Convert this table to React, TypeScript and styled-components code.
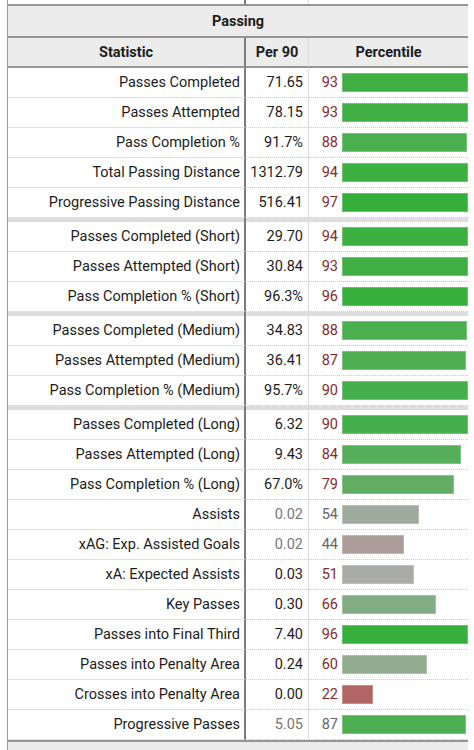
import styled, { createGlobalStyle } from "styled-components";

const Global = createGlobalStyle`
    body {
        margin: 0;
        background: #fff;
        font-family: Roboto, "Noto Sans", "Liberation Sans", sans-serif;
        color: #1c1c1c;
    }
`;

const Page = styled.div`
    width: 474px;
    height: 750px;
    overflow: hidden;
    padding-left: 7px;
    box-sizing: border-box;
`;

const Table = styled.div`
    width: 460px;
    border-left: 1px solid #9a9a9a;
`;

const Row = styled.div<{ $h?: number }>`
    display: grid;
    grid-template-columns: 238px 63px 159px;
    height: ${(p) => p.$h ?? 30}px;
    box-sizing: border-box;
`;

const StatCell = styled.div<{ $bg?: string; $line?: boolean }>`
    display: flex;
    align-items: center;
    justify-content: flex-end;
    padding-right: 4px;
    border-right: 2px solid #7c7c7c;
    border-bottom: ${(p) => (p.$line ? "1px solid #e1e1e1" : "none")};
    background: ${(p) => p.$bg ?? "#fff"};
    font-size: 14.5px;
    white-space: nowrap;
    box-sizing: border-box;
`;

const ValueCell = styled.div<{ $bg?: string; $line?: boolean; $muted?: boolean }>`
    display: flex;
    align-items: center;
    justify-content: flex-end;
    padding-right: 5px;
    border-right: 1px solid #dcdcdc;
    border-bottom: ${(p) => (p.$line ? "1px dotted #c8c8c8" : "none")};
    background: ${(p) => p.$bg ?? "#fff"};
    color: ${(p) => (p.$muted ? "#777" : "#1c1c1c")};
    font-size: 14.5px;
    box-sizing: border-box;
`;

const PctCell = styled.div<{ $bg?: string; $line?: boolean }>`
    display: flex;
    align-items: center;
    min-width: 0;
    border-bottom: ${(p) => (p.$line ? "1px dotted #c8c8c8" : "none")};
    background: ${(p) => p.$bg ?? "#fff"};
    box-sizing: border-box;
`;

const PctNum = styled.span<{ $muted?: boolean }>`
    flex: 0 0 29px;
    text-align: right;
    font-size: 14.5px;
    color: ${(p) => (p.$muted ? "#666" : "#862b2b")};
`;

const BarTrack = styled.div`
    flex: 1 1 0;
    min-width: 0;
    margin-left: 4px;
    height: 19px;
    display: flex;
    overflow: hidden;
`;

const Bar = styled.div`
    height: 100%;
    flex: none;
    max-width: 100%;
    box-sizing: border-box;
    border: 1px solid rgba(255, 255, 255, 0.25);
`;

const SectionHead = styled.div`
    height: 34px;
    border-top: 2px solid #959595;
    border-bottom: 2px solid #959595;
    background: #ececec;
    display: flex;
    align-items: center;
    justify-content: center;
    font-weight: 700;
    font-size: 14.5px;
    box-sizing: border-box;
`;

const HeadCell = styled.div<{ $dark?: boolean; $last?: boolean }>`
    display: flex;
    align-items: center;
    justify-content: center;
    background: #ececec;
    font-weight: 700;
    font-size: 14.5px;
    border-bottom: 2px solid #959595;
    border-right: ${(p) => (p.$last ? "none" : p.$dark ? "2px solid #7c7c7c" : "1px solid #dcdcdc")};
    box-sizing: border-box;
`;

type Stat = { name: string; value: string; pct: number; mutedValue?: boolean; mutedPct?: boolean };

const groups: Stat[][] = [
    [
        { name: "Passes Completed", value: "71.65", pct: 93 },
        { name: "Passes Attempted", value: "78.15", pct: 93 },
        { name: "Pass Completion %", value: "91.7%", pct: 88 },
        { name: "Total Passing Distance", value: "1312.79", pct: 94 },
        { name: "Progressive Passing Distance", value: "516.41", pct: 97 },
    ],
    [
        { name: "Passes Completed (Short)", value: "29.70", pct: 94 },
        { name: "Passes Attempted (Short)", value: "30.84", pct: 93 },
        { name: "Pass Completion % (Short)", value: "96.3%", pct: 96 },
    ],
    [
        { name: "Passes Completed (Medium)", value: "34.83", pct: 88 },
        { name: "Passes Attempted (Medium)", value: "36.41", pct: 87 },
        { name: "Pass Completion % (Medium)", value: "95.7%", pct: 90 },
    ],
    [
        { name: "Passes Completed (Long)", value: "6.32", pct: 90 },
        { name: "Passes Attempted (Long)", value: "9.43", pct: 84 },
        { name: "Pass Completion % (Long)", value: "67.0%", pct: 79 },
        { name: "Assists", value: "0.02", pct: 54, mutedValue: true, mutedPct: true },
        { name: "xAG: Exp. Assisted Goals", value: "0.02", pct: 44, mutedValue: true, mutedPct: true },
        { name: "xA: Expected Assists", value: "0.03", pct: 51 },
        { name: "Key Passes", value: "0.30", pct: 66 },
        { name: "Passes into Final Third", value: "7.40", pct: 96 },
        { name: "Passes into Penalty Area", value: "0.24", pct: 60 },
        { name: "Crosses into Penalty Area", value: "0.00", pct: 22 },
        { name: "Progressive Passes", value: "5.05", pct: 87, mutedValue: true, mutedPct: true },
    ],
];

// grey at 50th percentile, fading to green above and red below
function barColor(p: number) {
    const grey = [170, 171, 168];
    const end = p >= 50 ? [50, 175, 56] : [182, 52, 52];
    const t = Math.min(1, Math.abs(p - 50) / 48);
    const c = grey.map((g, i) => Math.round(g + (end[i] - g) * t));
    return `rgb(${c[0]}, ${c[1]}, ${c[2]})`;
}

function StatRow({ s }: { s: Stat }) {
    return (
        <Row>
            <StatCell $line>{s.name}</StatCell>
            <ValueCell $line $muted={s.mutedValue}>{s.value}</ValueCell>
            <PctCell $line>
                <PctNum $muted={s.mutedPct}>{s.pct}</PctNum>
                <BarTrack>
                    <Bar style={{ width: s.pct * 1.42, background: barColor(s.pct) }} />
                </BarTrack>
            </PctCell>
        </Row>
    );
}

function Spacer() {
    return (
        <Row $h={4}>
            <StatCell $bg="#dddddd" />
            <ValueCell $bg="#dddddd" />
            <PctCell $bg="#dddddd" />
        </Row>
    );
}

export default function App() {
    return (
        <Page>
            <Global />
            <Table>
                <Row $h={4}>
                    <StatCell />
                    <ValueCell />
                    <PctCell />
                </Row>
                <SectionHead>Passing</SectionHead>
                <Row>
                    <HeadCell $dark>Statistic</HeadCell>
                    <HeadCell>Per 90</HeadCell>
                    <HeadCell $last>Percentile</HeadCell>
                </Row>
                {groups.map((g, gi) => (
                    <div key={gi}>
                        {gi > 0 && <Spacer />}
                        {g.map((s) => (
                            <StatRow key={s.name} s={s} />
                        ))}
                    </div>
                ))}
                <SectionHead>Pass Types</SectionHead>
            </Table>
        </Page>
    );
}
